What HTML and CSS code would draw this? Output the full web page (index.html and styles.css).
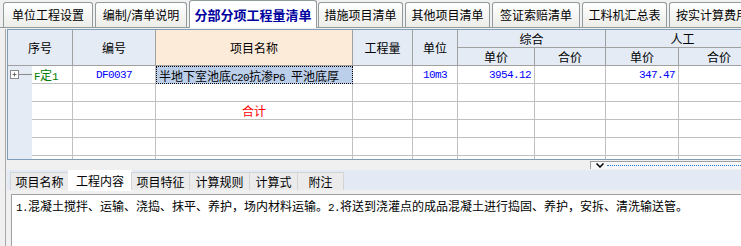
FILE: index.html
```html
<!DOCTYPE html>
<html lang="zh-CN">
<head>
<meta charset="utf-8">
<title>分部分项工程量清单</title>
<link rel="stylesheet" href="styles.css">
</head>
<body>
<div class="tabbar">
  <div class="tab t1">单位工程设置</div>
  <div class="tab t2">编制/清单说明</div>
  <div class="tab t3 on">分部分项工程量清单</div>
  <div class="tab t4">措施项目清单</div>
  <div class="tab t5">其他项目清单</div>
  <div class="tab t6">签证索赔清单</div>
  <div class="tab t7">工料机汇总表</div>
  <div class="tab t8">按实计算费用</div>
</div>
<div class="main">
  <div class="sheet">
    <div class="grid">
      <div class="hc c2 r2">序号</div>
      <div class="hc r2">编号</div>
      <div class="hc r2 namecol">项目名称</div>
      <div class="hc r2">工程量</div>
      <div class="hc r2">单位</div>
      <div class="hc c2">综合</div>
      <div class="hc c2">人工</div>
      <div class="hc">单价</div>
      <div class="hc">合价</div>
      <div class="hc">单价</div>
      <div class="hc">合价</div>

      <div class="tree"><svg width="24" height="17" viewBox="0 0 24 17"><rect x="2.5" y="4.5" width="8" height="8" fill="#fff" stroke="#8a8a8a"/><path d="M4.5 8.5h4M6.5 6.5v4" stroke="#6a6a6a"/><path d="M11 8.5h13" stroke="#8a8a8a"/></svg></div>
      <div class="c seq green"><span class="txt"><span class="a">F</span>定<span class="a">1</span></span></div>
      <div class="c mid blue"><span class="a">DF0037</span></div>
      <div class="c sel"><span class="txt">半地下室池底<span class="a">C20</span>抗渗<span class="a">P6&nbsp;</span>平池底厚</span></div>
      <div class="c"></div>
      <div class="c mid blue"><span class="a">10m3</span></div>
      <div class="c right blue"><span class="a">3954.12</span></div>
      <div class="c"></div>
      <div class="c right blue"><span class="a">347.47</span></div>
      <div class="c"></div>

      <div class="tree"></div><div class="c"></div><div class="c"></div><div class="c"></div><div class="c"></div><div class="c"></div><div class="c"></div><div class="c"></div><div class="c"></div><div class="c"></div>

      <div class="tree"></div><div class="c"></div><div class="c"></div><div class="c mid red">合计</div><div class="c"></div><div class="c"></div><div class="c"></div><div class="c"></div><div class="c"></div><div class="c"></div>

      <div class="tree"></div><div class="c"></div><div class="c"></div><div class="c"></div><div class="c"></div><div class="c"></div><div class="c"></div><div class="c"></div><div class="c"></div><div class="c"></div>

      <div class="tree"></div><div class="c"></div><div class="c"></div><div class="c"></div><div class="c"></div><div class="c"></div><div class="c"></div><div class="c"></div><div class="c"></div><div class="c"></div>

      <div class="tree"></div><div class="c"></div><div class="c"></div><div class="c"></div><div class="c"></div><div class="c"></div><div class="c"></div><div class="c"></div><div class="c"></div><div class="c"></div>
    </div>
  </div>
  <div class="split">
    <div class="handle"><svg width="8" height="5" viewBox="0 0 8 5"><path d="M0.5 0.5L4 4L7.5 0.5" fill="none" stroke="#000" stroke-width="1.5"/></svg><span class="dots"></span></div>
  </div>
  <div class="subtabs">
    <div class="stab s1">项目名称</div>
    <div class="stab s2 on">工程内容</div>
    <div class="stab s3">项目特征</div>
    <div class="stab s4">计算规则</div>
    <div class="stab s5">计算式</div>
    <div class="stab s6">附注</div>
  </div>
  <div class="gap"></div>
  <div class="desc"><span class="a">1.</span>混凝土搅拌、运输、浇捣、抹平、养护，场内材料运输。<span class="a">2.</span>将送到浇灌点的成品混凝土进行捣固、养护，安拆、清洗输送管。</div>
</div>
</body>
</html>
```
FILE: styles.css
```css
* { box-sizing: border-box; }
html, body { margin: 0; padding: 0; }
body {
  width: 741px;
  height: 246px;
  overflow: hidden;
  background: #f0f0f0;
  font-family: "Noto Sans CJK SC", sans-serif;
  font-size: 12px;
  color: #000;
}
.a {
  font-family: "Liberation Mono", monospace;
  font-size: 11px;
  letter-spacing: -0.6px;
}
.txt { white-space: pre; }

/* top tabs */
.tabbar {
  height: 28px;
  border-bottom: 1px solid #919b9c;
  display: flex;
  align-items: flex-end;
  gap: 2px;
  padding-left: 3px;
  white-space: nowrap;
}
.tab {
  flex: none;
  height: 25px;
  border: 1px solid #919b9c;
  border-bottom: none;
  border-radius: 3px 3px 0 0;
  background: linear-gradient(#ffffff, #ececE8);
  display: flex;
  align-items: center;
  justify-content: center;
  line-height: 1;
}
.t1 { width: 90px; }
.t2 { width: 92px; }
.t3 { width: 128px; margin-right: -1px; }
.t4 { width: 85px; }
.t5 { width: 85px; }
.t6 { width: 88px; }
.t7 { width: 85px; }
.t8 { width: 90px; justify-content: flex-start; padding-left: 6px; }
.tab.on {
  height: 28px;
  margin-bottom: -1px;
  background: #fff;
  color: #0000a0;
  font-weight: bold;
  font-size: 13px;
}

/* main panel */
.main {
  margin-left: 5px;
  border-left: 1px solid #a8a8a8;
  padding-left: 1px;
  height: 218px;
}
.sheet {
  margin-top: 1px;
  width: 754px;
  height: 131px;
  border: 1px solid #7f9db9;
  overflow: hidden;
  background: #fff;
}
.grid {
  display: grid;
  grid-template-columns: 24px 41px 83px 197px 60px 45px 77px 71px 73px 81px;
  grid-auto-rows: 18px;
}
.hc {
  background: #e4ebf5;
  border-right: 1px solid #a0a0a0;
  border-bottom: 1px solid #a0a0a0;
  display: flex;
  align-items: center;
  justify-content: center;
  white-space: nowrap;
}
.c2 { grid-column: span 2; }
.r2 { grid-row: span 2; }
.namecol { background: #fdebd9; }

.tree { background: #e4ebf5; }
.tree svg { display: block; }
.c {
  border-right: 1px solid #c0c0c0;
  border-bottom: 1px solid #c0c0c0;
  display: flex;
  align-items: center;
  padding: 0 3px;
  white-space: nowrap;
  overflow: hidden;
}
.seq { padding-left: 2px; }
.mid { justify-content: center; }
.right { justify-content: flex-end; }
.green { color: #008000; }
.blue { color: #0000ff; }
.red { color: #ff0000; }
.sel {
  background: #bccfea;
  border: 1px dotted #000;
  padding-left: 2px;
}

/* splitter */
.split {
  height: 10px;
  padding-top: 1px;
  display: flex;
  justify-content: flex-end;
}
.handle {
  width: 151px;
  height: 8px;
  border-top: 1px solid #a0a0a0;
  border-left: 1px solid #a0a0a0;
  background: #f8f8f8;
  display: flex;
  align-items: center;
  gap: 3px;
  padding-left: 5px;
}
.handle svg { display: block; }
.dots {
  flex: 1;
  border-top: 1px dotted #2a7ad8;
}

/* bottom tabs */
.subtabs {
  height: 20px;
  background: #e3eaf6;
  display: flex;
  align-items: flex-end;
  padding-left: 3px;
  white-space: nowrap;
}
.stab {
  flex: none;
  height: 18px;
  border: 1px solid #d4d4d4;
  border-bottom: none;
  margin-right: -1px;
  background: #ebebeb;
  display: flex;
  align-items: center;
  justify-content: center;
  line-height: 1;
}
.s1 { width: 59px; }
.s2 { width: 64px; }
.s3 { width: 59px; }
.s4 { width: 61px; }
.s5 { width: 49px; }
.s6 { width: 47px; }
.stab.on {
  height: 21px;
  margin-bottom: -1px;
  background: #fff;
  border-color: #fff;
}
.gap { height: 4px; }
.desc {
  margin-left: 4px;
  height: 60px;
  border-top: 1px solid #a0a0a0;
  border-left: 1px solid #a0a0a0;
  background: #fff;
  padding: 3px 0 0 4px;
  line-height: 16px;
  white-space: nowrap;
}
```
